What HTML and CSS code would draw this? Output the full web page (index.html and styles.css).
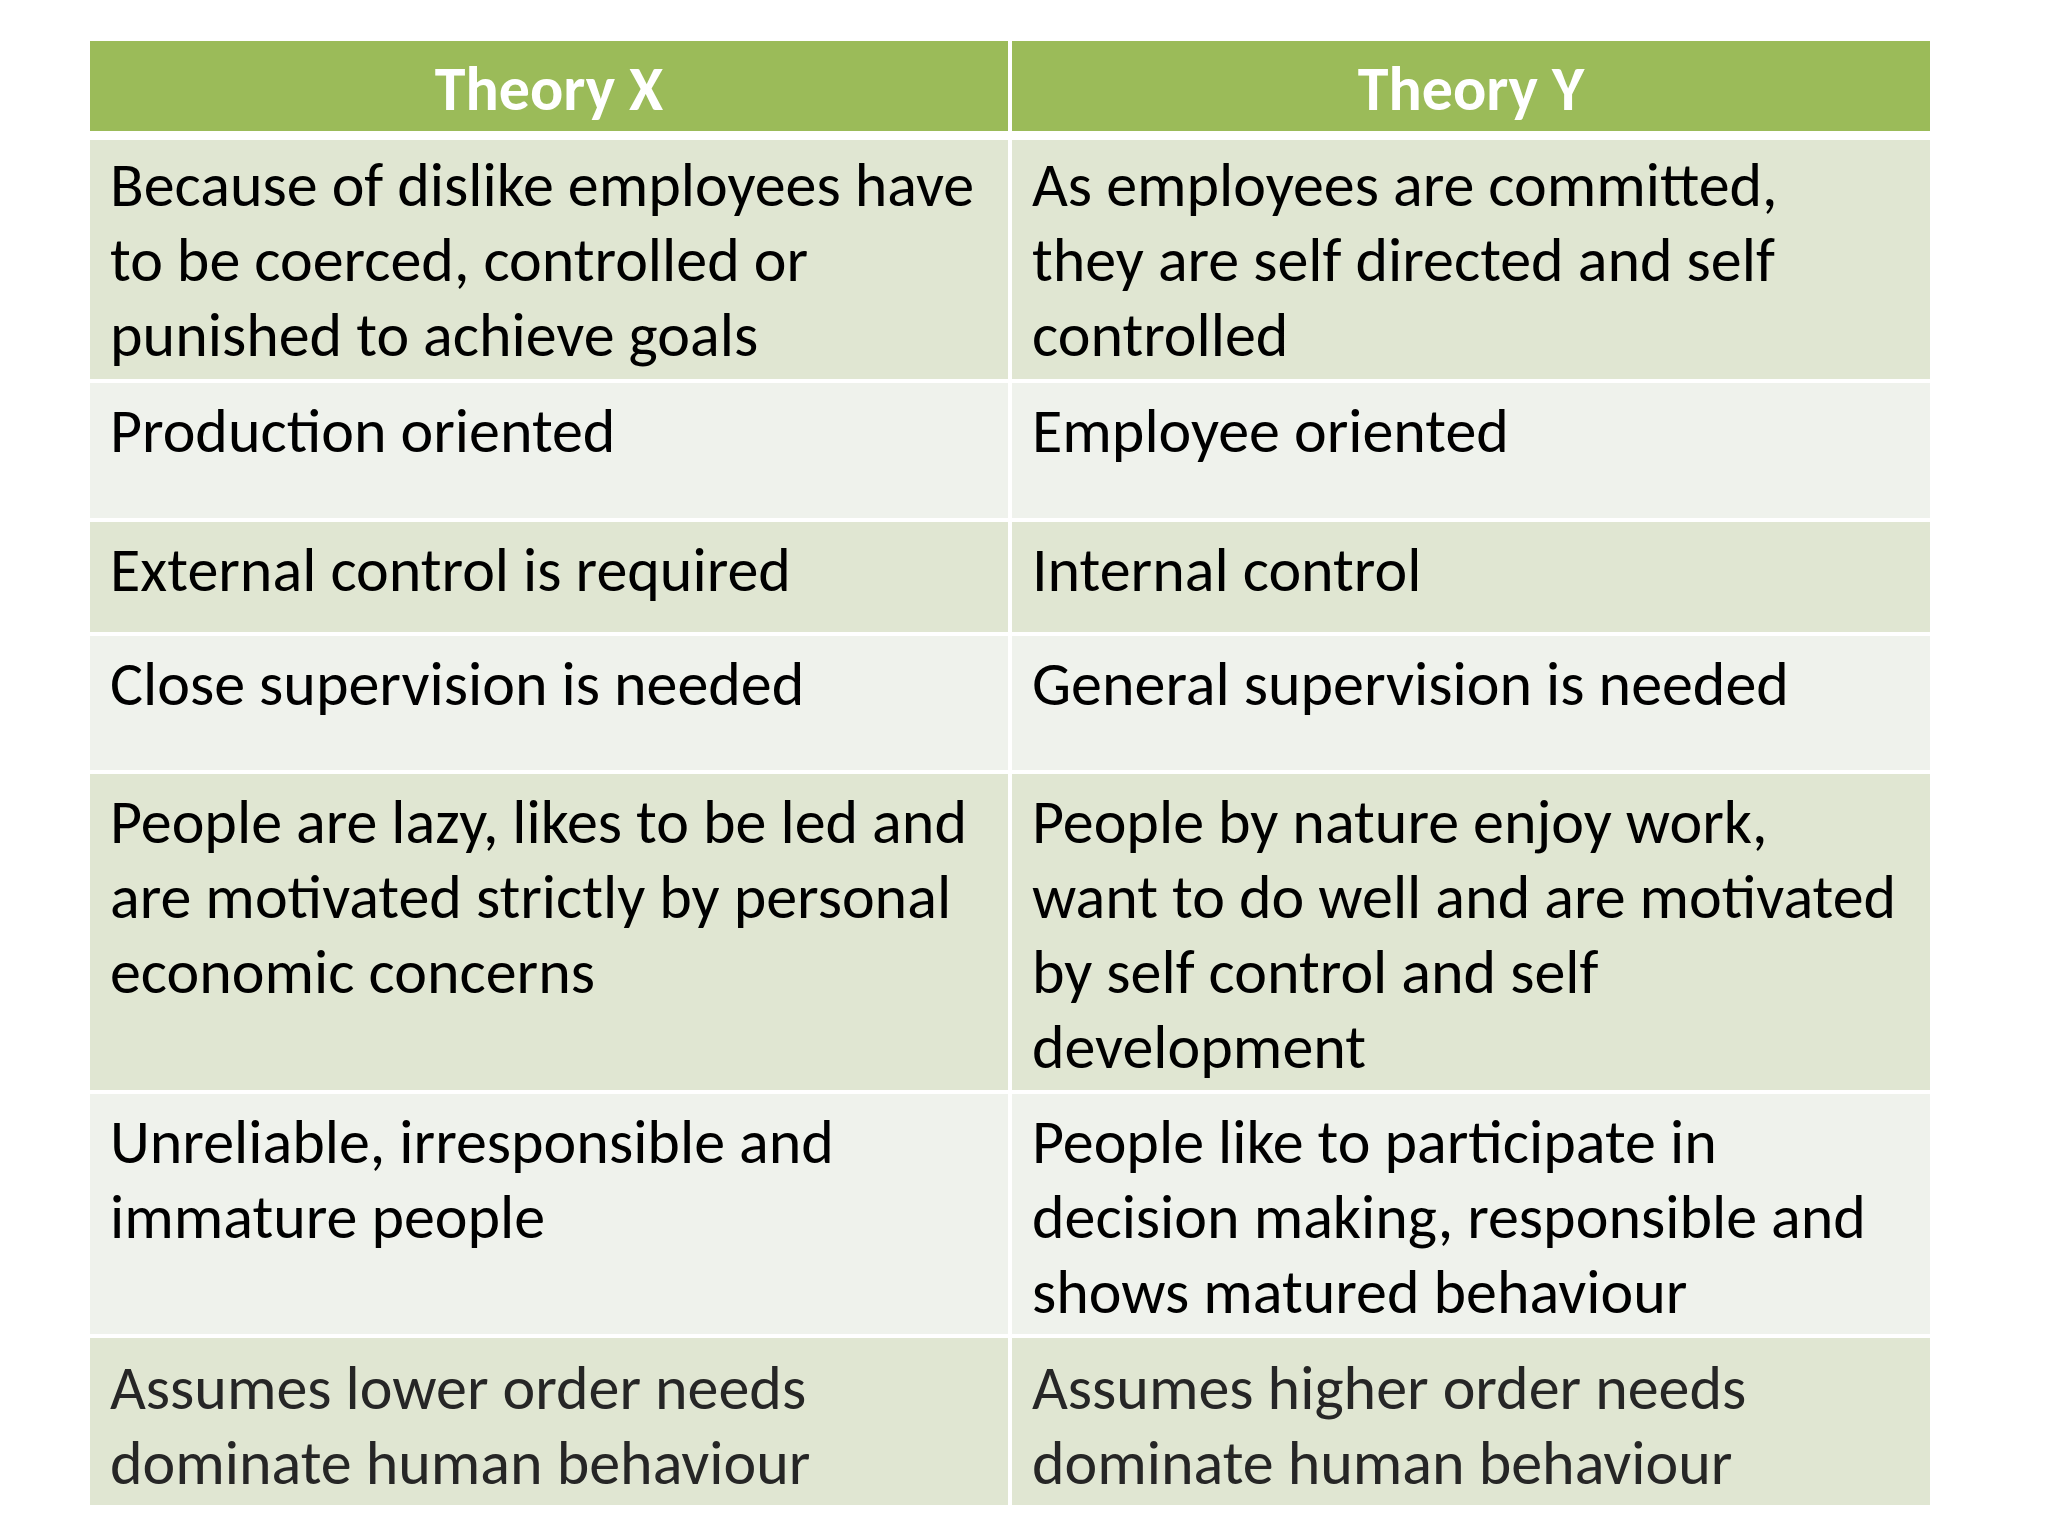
FILE: index.html
```html
<!DOCTYPE html>
<html lang="en">
<head>
<meta charset="utf-8">
<title>Theory X vs Theory Y</title>
<link rel="stylesheet" href="styles.css">
</head>
<body>
<div class="page">
  <div class="table">
    <div class="cell head">Theory X</div>
    <div class="cell head">Theory Y</div>

    <div class="cell odd first">Because of dislike employees have<br>to be coerced, controlled or<br>punished to achieve goals</div>
    <div class="cell odd first">As employees are committed,<br>they are self directed and self<br>controlled</div>

    <div class="cell even">Production oriented</div>
    <div class="cell even">Employee oriented</div>

    <div class="cell odd">External control is required</div>
    <div class="cell odd">Internal control</div>

    <div class="cell even">Close supervision is needed</div>
    <div class="cell even">General supervision is needed</div>

    <div class="cell odd">People are lazy, likes to be led and<br>are motivated strictly by personal<br>economic concerns</div>
    <div class="cell odd">People by nature enjoy work,<br>want to do well and are motivated<br>by self control and self<br>development</div>

    <div class="cell even">Unreliable, irresponsible and<br>immature people</div>
    <div class="cell even">People like to participate in<br>decision making, responsible and<br>shows matured behaviour</div>

    <div class="cell odd last">Assumes lower order needs<br>dominate human behaviour</div>
    <div class="cell odd last">Assumes higher order needs<br>dominate human behaviour</div>
  </div>
</div>
</body>
</html>
```
FILE: styles.css
```css
html, body {
  margin: 0;
  padding: 0;
  background: #ffffff;
}

.page {
  width: 2048px;
  height: 1536px;
  padding: 41px 0 0 90px;
  box-sizing: border-box;
}

.table {
  display: grid;
  grid-template-columns: 918px 918px;
  grid-template-rows: 95px 239px 135px 110px 134px 316px 240px 167px;
  column-gap: 4px;
  row-gap: 4px;
  font-family: Carlito, Lato, "Open Sans", sans-serif;
}

.cell {
  box-sizing: border-box;
  padding: 11px 10px 0 20px;
  font-size: 62px;
  line-height: 75px;
  color: #000000;
  white-space: nowrap;
  overflow: hidden;
}

.first {
  padding-top: 8px;
}

.last {
  padding-top: 13px;
  color: #262626;
}

.head {
  background: #9bbb59;
  border-bottom: 5px solid #ffffff;
  color: #ffffff;
  font-weight: 700;
  text-align: center;
  font-size: 62px;
  line-height: 74px;
  padding: 11px 0 0 0;
}

.odd {
  background: #e0e6d2;
}

.even {
  background: #eff2ec;
}
```
